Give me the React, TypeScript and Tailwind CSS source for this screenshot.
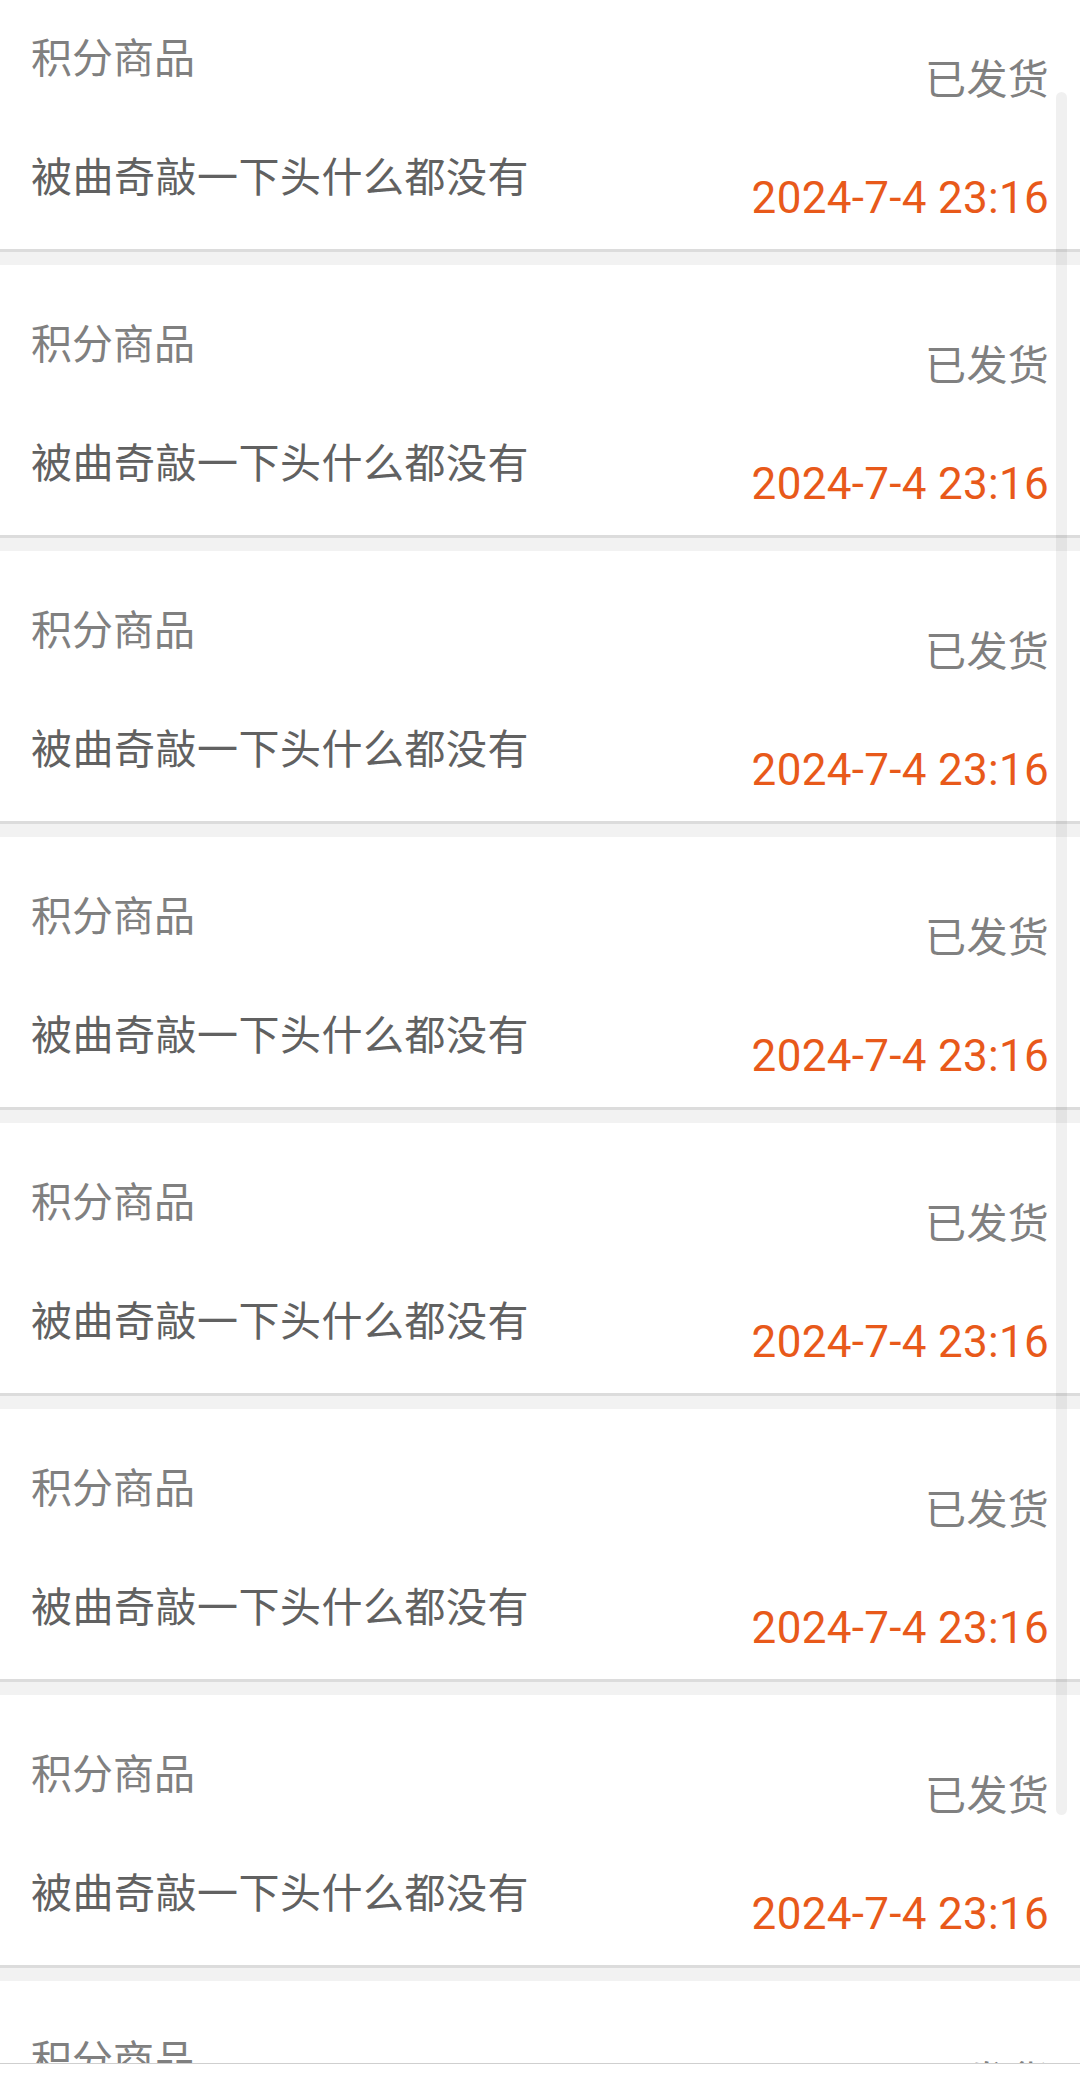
import React from "react";

const items = Array.from({ length: 8 });

function Card() {
  return (
    <div className="flex h-[273px] shrink-0 justify-between bg-white pl-[31px] pr-[31px] border-b-[3px] border-[#dcdcdc]">
      <div className="flex flex-col">
        <div className="mt-[52px] text-[41px] leading-[56px] text-[#808080]">积分商品</div>
        <div className="mt-[63px] text-[41px] leading-[56px] tracking-[0.5px] text-[#616161]">被曲奇敲一下头什么都没有</div>
      </div>
      <div className="flex flex-col items-end">
        <div className="mt-[73px] text-[41px] leading-[56px] tracking-[0.3px] text-[#808080]">已发货</div>
        <div className="mt-[62px] text-[44px] leading-[56px] tracking-[0.3px] text-[#e8591a]">2024-7-4 23:16</div>
      </div>
    </div>
  );
}

export default function App() {
  return (
    <div
      className="relative flex h-[2086px] w-[1080px] flex-col overflow-hidden bg-[#f2f2f2]"
      style={{ fontFamily: 'Roboto, "Noto Sans CJK SC", sans-serif' }}
    >
      <div className="flex-1 overflow-hidden">
        <div className="-mt-[21px] flex flex-col gap-[13px]">
          {items.map((_, i) => (
            <Card key={i} />
          ))}
        </div>
      </div>
      <div className="h-[23px] shrink-0 border-t border-[#cfcfcf] bg-white" />
      <div className="absolute left-[1056px] top-[92px] h-[1723px] w-[11px] rounded-full bg-black/[0.06]" />
    </div>
  );
}
